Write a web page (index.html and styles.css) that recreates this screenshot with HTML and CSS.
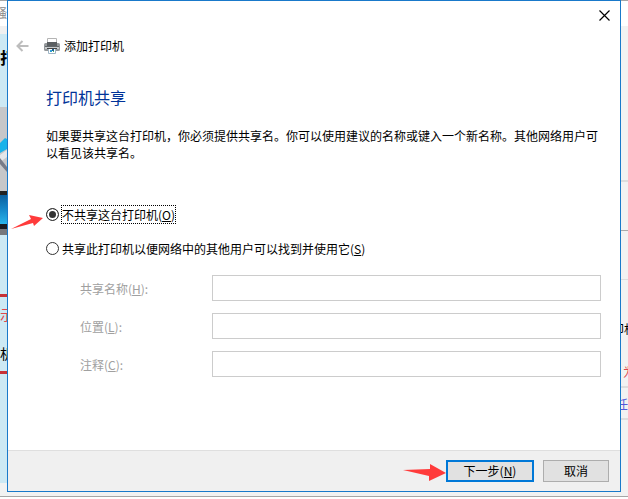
FILE: index.html
```html
<!DOCTYPE html>
<html lang="zh-CN">
<head>
    <meta charset="UTF-8">
    <meta name="viewport" content="width=device-width, initial-scale=1.0">
    <title>添加打印机</title>
    <link rel="stylesheet" href="styles.css">
</head>
<body>
    <div class="desktop">
        <!-- Page behind the dialog, left edge -->
        <div class="strip left">
            <div class="tab"><span>骚</span></div>
            <div class="toolbar"></div>
            <div class="heading"><span>打</span></div>
            <svg class="photo" width="7" height="128" viewBox="0 0 7 128">
                <defs>
                    <linearGradient id="screen" x1="0" y1="0" x2="0" y2="1">
                        <stop offset="0" stop-color="#0b5f9e"/>
                        <stop offset="0.5" stop-color="#1688c9"/>
                        <stop offset="1" stop-color="#2bb5ea"/>
                    </linearGradient>
                </defs>
                <rect width="7" height="128" fill="#c6c7c9"/>
                <path d="M0 36L5 31L7 32V42L0 46Z" fill="#1ab3ea"/>
                <path d="M0 48L7 43V50L0 55Z" fill="#e3e6ea"/>
                <path d="M0 51L7 60V65L0 57Z" fill="#777b88"/>
                <rect y="84" width="7" height="4" fill="#222"/>
                <rect y="88" width="7" height="29" fill="url(#screen)"/>
                <rect y="117" width="7" height="5" fill="#1d1d22"/>
                <rect y="122" width="7" height="6" fill="#77787c"/>
            </svg>
            <div class="space"></div>
            <div class="note">
                <span class="red">示</span>
                <span>机</span>
            </div>
        </div>

        <form class="dialog">
            <button type="button" class="close" aria-label="关闭">
                <svg width="11" height="11" viewBox="0 0 11 11"><path d="M0.5 0.5L10.5 10.5M10.5 0.5L0.5 10.5" stroke="#000" stroke-width="1.2"/></svg>
            </button>
            <div class="header">
                <button type="button" class="back" aria-label="返回">
                    <svg width="13" height="12" viewBox="0 0 13 12"><path d="M12.5 6H1.5M6.5 1L1.5 6L6.5 11" fill="none" stroke="#bdbdbd" stroke-width="2"/></svg>
                </button>
                <svg width="16" height="16" viewBox="0 0 16 16">
                    <path d="M3.500 6V0.500H12.500V6" fill="#fff" stroke="#b4b4b4"/>
                    <rect y="5" width="16" height="8" rx="1.500" fill="#94989b"/>
                    <rect x="3" y="4" width="10" height="4" fill="#5b5f62"/>
                    <rect x="1" y="8" width="14" height="1" fill="#62676a"/>
                    <rect x="1" y="9" width="14" height="2" fill="#c7cacc"/>
                    <rect x="3" y="10" width="10" height="1" fill="#444"/>
                    <path d="M4.500 11V15.500H11.500V11" fill="#fff" stroke="#9fb6c6"/>
                    <rect x="6" y="12" width="2" height="2" fill="#2f9fd8"/>
                    <rect x="8" y="11" width="2" height="2" fill="#1d5f91"/>
                    <rect x="9" y="13" width="1" height="1" fill="#5bb85b"/>
                </svg>
                <span>添加打印机</span>
            </div>

            <div class="content">
                <h1>打印机共享</h1>
                <p>如果要共享这台打印机，你必须提供共享名。你可以使用建议的名称或键入一个新名称。其他网络用户可以看见该共享名。</p>

                <div class="option">
                    <input type="radio" name="share" id="share-no" checked>
                    <label for="share-no" class="focused">不共享这台打印机(<u>O</u>)</label>
                </div>
                <div class="option">
                    <input type="radio" name="share" id="share-yes">
                    <label for="share-yes">共享此打印机以便网络中的其他用户可以找到并使用它(<u>S</u>)</label>
                </div>

                <div class="fields">
                    <label for="share-name">共享名称(<u>H</u>):</label>
                    <input type="text" id="share-name" disabled>
                    <label for="location">位置(<u>L</u>):</label>
                    <input type="text" id="location" disabled>
                    <label for="comment">注释(<u>C</u>):</label>
                    <input type="text" id="comment" disabled>
                </div>
            </div>

            <div class="footer">
                <button type="button" class="button next">下一步(<u>N</u>)</button>
                <button type="button" class="button">取消</button>
            </div>

            <!-- Red pointers drawn over the dialog -->
            <svg class="arrow arrow-option" width="32" height="15" viewBox="0 0 32 15"><path d="M0 14L20 4L18 0L32 3L23 11L22 8Z" fill="#ff3b3b"/></svg>
            <svg class="arrow arrow-next" width="43" height="17" viewBox="0 0 43 17"><path d="M0 6L27 5V0L43 9L26 17V12Z" fill="#ff3b3b"/></svg>
        </form>

        <!-- Page behind the dialog, right edge -->
        <div class="strip right">
            <div class="tab"></div>
            <div class="block tall"></div>
            <div class="block dark"></div>
            <div class="block"></div>
            <div class="list">
                <span class="wide">印机</span>
                <span class="red">为</span>
            </div>
            <div class="link"><span>任</span></div>
        </div>
    </div>
    <div class="taskbar"></div>
</body>
</html>
```
FILE: styles.css
```css
* {
    box-sizing: border-box;
}
body {
    margin: 0;
    min-height: 100vh;
    display: flex;
    flex-direction: column;
    background-color: #f2f2f2;
    font-family: "Noto Sans CJK SC", sans-serif;
    font-size: 12px;
    line-height: 17px;
    color: #000;
}
.desktop {
    flex: 1;
    display: grid;
    grid-template-columns: 7px 1fr 7px;
}
.taskbar {
    height: 3px;
    background-color: #fff;
    border-top: 1px solid #a6a6a6;
}

/* Dialog */
.dialog {
    position: relative;
    display: flex;
    flex-direction: column;
    margin-bottom: 4px;
    background-color: #fff;
    border: 1px solid #1979ca;
}
button {
    font: inherit;
    color: inherit;
    padding: 0;
}
.close,
.back {
    display: flex;
    border: none;
    background: none;
}
.close {
    align-self: flex-end;
    margin: 9px 10px 0 0;
}
.header {
    display: flex;
    align-items: center;
    margin-top: 16px;
    padding-left: 8px;
}
.back {
    margin-right: 15px;
}
.header span {
    margin-left: 4px;
}
.content {
    flex: 1;
    padding: 32px 19px 0 38px;
}
h1 {
    margin: 0;
    font-size: 16px;
    font-weight: normal;
    line-height: 22px;
    color: #003399;
}
p {
    margin: 19px 0 44px;
}
.option {
    display: flex;
    align-items: center;
    height: 19px;
    margin-bottom: 15px;
}
.option input {
    appearance: none;
    width: 13px;
    height: 13px;
    margin: 0 2px 0 0;
    border: 1px solid #333;
    border-radius: 50%;
    background-color: #fff;
}
.option input:checked {
    background-color: #333;
    border-color: #333;
    box-shadow: inset 0 0 0 2px #fff;
}
.option label {
    border: 1px dotted transparent;
}
.option .focused {
    border-color: #000;
}
.fields {
    display: grid;
    grid-template-columns: 132px 1fr;
    align-items: center;
    row-gap: 12px;
    margin-top: 17px;
    padding-left: 34px;
    color: #a0a0a0;
}
.fields input {
    width: 100%;
    height: 26px;
    border: 1px solid #ccc;
    background-color: #fff;
}
.footer {
    display: flex;
    justify-content: flex-end;
    gap: 9px;
    padding: 9px 11px;
    background-color: #f0f0f0;
    border-top: 1px solid #dfdfdf;
}
.button {
    width: 66px;
    height: 22px;
    line-height: 16px;
    border: 1px solid #adadad;
    background-color: #e1e1e1;
}
.next {
    width: 88px;
    border: 2px solid #0078d7;
}
.arrow {
    position: absolute;
}
.arrow-option {
    left: 3px;
    top: 214px;
}
.arrow-next {
    right: 174px;
    bottom: 10px;
}

/* Edges of the page behind */
.strip {
    overflow: hidden;
    border-top: 1px solid #a6a6a6;
}
.strip span {
    display: block;
}
.tab {
    height: 25px;
    background-color: #fff;
}
.left {
    background: linear-gradient(#cde9f4 482px, #f2f2f2 482px);
}
.left .tab {
    display: flex;
    justify-content: flex-end;
    padding-top: 3px;
    color: #888;
}
.toolbar {
    height: 8px;
    background-color: #f0f0f0;
}
.heading {
    height: 73px;
    padding-top: 15px;
    font-size: 16px;
    font-weight: bold;
}
.photo {
    display: block;
}
.space {
    height: 59px;
}
.note {
    display: flex;
    flex-direction: column;
    gap: 22px;
    height: 80px;
    padding-top: 9px;
    font-size: 14px;
    border-top: 3px solid #c83237;
    border-bottom: 3px solid #c83237;
}
.red {
    color: #e0474c;
}
.right .block {
    height: 49px;
    border-bottom: 1px solid #ddd;
}
.right .tall {
    height: 156px;
    border-bottom-width: 2px;
}
.right .dark {
    border-color: #aaa;
}
.list {
    display: flex;
    flex-direction: column;
    gap: 26px;
    height: 108px;
    padding-top: 40px;
    border-bottom: 2px solid #ddd;
}
.list .wide {
    white-space: nowrap;
    margin-left: -9px;
}
.list .red {
    padding-left: 2px;
}
.link {
    display: flex;
    justify-content: flex-end;
    height: 32px;
    padding-top: 7px;
    border-bottom: 2px solid #ddd;
    color: #5558d8;
}
```
